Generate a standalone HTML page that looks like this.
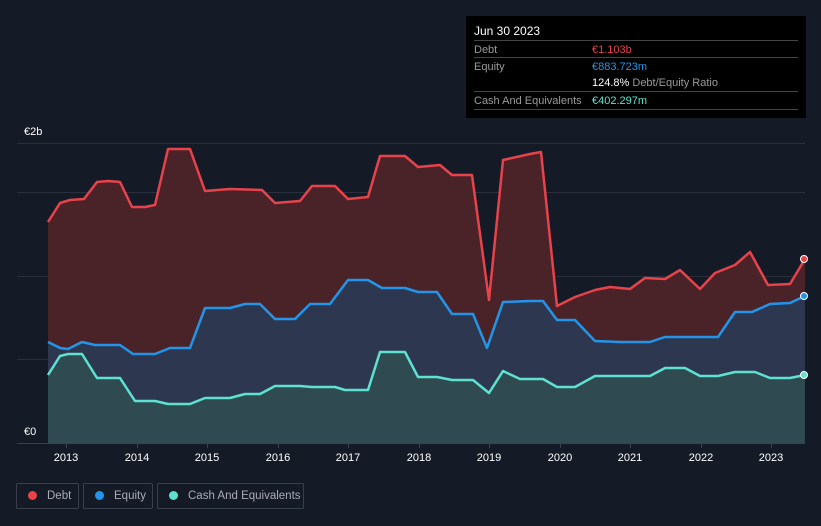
<!DOCTYPE html>
<html><head><meta charset="utf-8"><style>
body{margin:0;background:#151b26;width:821px;height:526px;overflow:hidden;font-family:"Liberation Sans",sans-serif;position:relative}
.tt{position:absolute;left:466px;top:16px;width:340px;height:102px;background:#000;color:#fff;font-size:11px}
.tt .r{position:absolute;left:8px;right:8px;border-top:1px solid #444;height:18px;line-height:18px;color:#9a9a9a}
.tt .v{position:absolute;left:118px}
.lg{position:absolute;top:483px;height:26px;border:1px solid #3a404c;border-radius:2px;color:#aab;font-size:11.5px;line-height:24px;box-sizing:border-box;white-space:nowrap;overflow:hidden}
.lg i{display:inline-block;width:9px;height:9px;border-radius:50%;margin:0 10px 0 11px;vertical-align:-1px}
</style></head><body>
<svg width="821" height="526" style="position:absolute;left:0;top:0">
<g stroke="#2a303b" stroke-width="1"><line x1="17" y1="143.5" x2="805" y2="143.5"/><line x1="17" y1="192.5" x2="805" y2="192.5"/><line x1="17" y1="276.5" x2="805" y2="276.5"/><line x1="17" y1="359.5" x2="805" y2="359.5"/></g>
<polygon fill="#4a2329" points="48,443 48,222 60,203 70,200 84,199 97,182 108,181 120,182 132,207 145,207 155,205 168,149 190,149 205,191 230,189 262,190 275,203 300,201 312,186 335,186 348,199 368,197 380,156 405,156 418,167 440,165 452,175 472,175 489,300 503,160 530,154 541,152 557,306 575,297 595,290 610,287 630,289 645,278 665,279 680,270 700,289 715,273 735,265 750,252 768,285 790,284 805,259 805,443"/>
<polygon fill="#2d3850" points="48,443 48,342 60,348 68,349 82,342 95,345 120,345 133,354 155,354 170,348 190,348 205,308 230,308 245,304 260,304 275,319 295,319 310,304 330,304 348,280 368,280 382,288 405,288 418,292 437,292 452,314 473,314 487,348 503,302 530,301 543,301 557,320 575,320 595,341 620,342 650,342 665,337 690,337 718,337 735,312 752,312 770,304 790,303 805,296 805,443"/>
<polygon fill="#2f4a50" points="48,443 48,375 60,356 68,354 82,354 97,378 120,378 135,401 155,401 168,404 190,404 205,398 230,398 245,394 260,394 275,386 300,386 312,387 335,387 345,390 368,390 380,352 405,352 418,377 437,377 452,380 473,380 489,393 503,371 520,379 543,379 557,387 575,387 595,376 620,376 650,376 665,368 685,368 700,376 718,376 735,372 755,372 770,378 790,378 805,375 805,443"/>
<polyline fill="none" stroke="#e8424a" stroke-width="2.5" stroke-linejoin="round" points="48,222 60,203 70,200 84,199 97,182 108,181 120,182 132,207 145,207 155,205 168,149 190,149 205,191 230,189 262,190 275,203 300,201 312,186 335,186 348,199 368,197 380,156 405,156 418,167 440,165 452,175 472,175 489,300 503,160 530,154 541,152 557,306 575,297 595,290 610,287 630,289 645,278 665,279 680,270 700,289 715,273 735,265 750,252 768,285 790,284 805,259"/>
<polyline fill="none" stroke="#2394e8" stroke-width="2.5" stroke-linejoin="round" points="48,342 60,348 68,349 82,342 95,345 120,345 133,354 155,354 170,348 190,348 205,308 230,308 245,304 260,304 275,319 295,319 310,304 330,304 348,280 368,280 382,288 405,288 418,292 437,292 452,314 473,314 487,348 503,302 530,301 543,301 557,320 575,320 595,341 620,342 650,342 665,337 690,337 718,337 735,312 752,312 770,304 790,303 805,296"/>
<polyline fill="none" stroke="#5ee2cf" stroke-width="2.5" stroke-linejoin="round" points="48,375 60,356 68,354 82,354 97,378 120,378 135,401 155,401 168,404 190,404 205,398 230,398 245,394 260,394 275,386 300,386 312,387 335,387 345,390 368,390 380,352 405,352 418,377 437,377 452,380 473,380 489,393 503,371 520,379 543,379 557,387 575,387 595,376 620,376 650,376 665,368 685,368 700,376 718,376 735,372 755,372 770,378 790,378 805,375"/>
<circle cx="804" cy="259" r="3.5" fill="#e8424a" stroke="#fff" stroke-width="1"/>
<circle cx="804" cy="296" r="3.5" fill="#2394e8" stroke="#fff" stroke-width="1"/>
<circle cx="804" cy="375" r="3.5" fill="#5ee2cf" stroke="#fff" stroke-width="1"/>
<line x1="17" y1="443.5" x2="805" y2="443.5" stroke="#3a404c"/>
<g stroke="#3a404c"><line x1="66.5" y1="443" x2="66.5" y2="448"/><line x1="137.5" y1="443" x2="137.5" y2="448"/><line x1="207.5" y1="443" x2="207.5" y2="448"/><line x1="278.5" y1="443" x2="278.5" y2="448"/><line x1="348.5" y1="443" x2="348.5" y2="448"/><line x1="419.5" y1="443" x2="419.5" y2="448"/><line x1="489.5" y1="443" x2="489.5" y2="448"/><line x1="560.5" y1="443" x2="560.5" y2="448"/><line x1="630.5" y1="443" x2="630.5" y2="448"/><line x1="701.5" y1="443" x2="701.5" y2="448"/><line x1="771.5" y1="443" x2="771.5" y2="448"/></g>
<g fill="#fff" font-size="11" text-anchor="middle" font-family="Liberation Sans,sans-serif"><text x="66" y="461">2013</text><text x="137" y="461">2014</text><text x="207" y="461">2015</text><text x="278" y="461">2016</text><text x="348" y="461">2017</text><text x="419" y="461">2018</text><text x="489" y="461">2019</text><text x="560" y="461">2020</text><text x="630" y="461">2021</text><text x="701" y="461">2022</text><text x="771" y="461">2023</text></g>
<text x="24" y="135" fill="#fff" font-size="11" font-family="Liberation Sans,sans-serif">€2b</text>
<text x="24" y="435" fill="#fff" font-size="11" font-family="Liberation Sans,sans-serif">€0</text>
</svg>
<div class="tt">
<div style="position:absolute;left:8px;top:8px;font-size:12px">Jun 30 2023</div>
<div class="r" style="top:24px">Debt<span class="v" style="color:#e8424a">€1.103b</span></div>
<div class="r" style="top:41px">Equity<span class="v" style="color:#2394e8">€883.723m</span></div>
<div class="r" style="top:58px;border-top:none"><span class="v"><b style="color:#fff;font-weight:normal">124.8%</b> Debt/Equity Ratio</span></div>
<div class="r" style="top:75px">Cash And Equivalents<span class="v" style="color:#5ee2cf">€402.297m</span></div>
<div class="r" style="top:93px;height:0"></div>
</div>
<div class="lg" style="left:16px;width:63px"><i style="background:#e8424a"></i>Debt</div>
<div class="lg" style="left:83px;width:70px"><i style="background:#2394e8"></i>Equity</div>
<div class="lg" style="left:157px;width:147px"><i style="background:#5ee2cf"></i>Cash And Equivalents</div>
</body></html>
